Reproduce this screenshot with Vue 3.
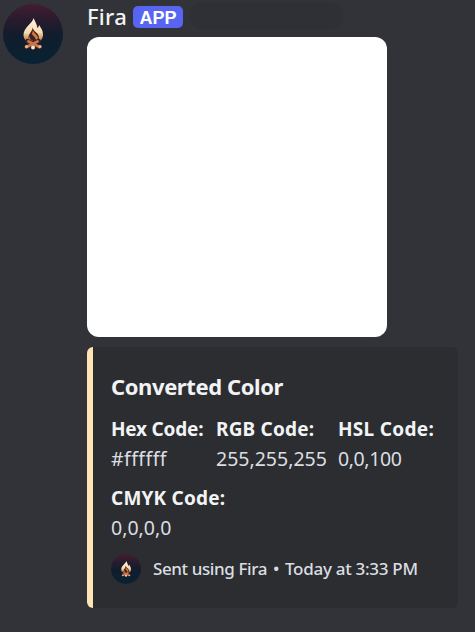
<script setup>
const fields = [
  { name: 'Hex Code:', value: '#ffffff', key: 'hex' },
  { name: 'RGB Code:', value: '255,255,255', key: 'rgb' },
  { name: 'HSL Code:', value: '0,0,100', key: 'hsl' },
  { name: 'CMYK Code:', value: '0,0,0,0', key: 'cmyk' },
]
</script>

<template>
  <main class="message">
    <svg class="avatar" viewBox="0 0 60 60">
      <defs>
        <linearGradient id="night" x1="0" y1="0" x2="0" y2="1">
          <stop offset="0" stop-color="#431e2f" />
          <stop offset=".25" stop-color="#2a1b2e" />
          <stop offset=".52" stop-color="#101d2d" />
          <stop offset="1" stop-color="#092234" />
        </linearGradient>
        <linearGradient id="flame" x1="0" y1="0" x2="0" y2="1">
          <stop offset="0" stop-color="#fff5df" />
          <stop offset=".6" stop-color="#f8dbb0" />
          <stop offset="1" stop-color="#b8683c" />
        </linearGradient>
        <symbol id="campfire" viewBox="0 0 60 60">
          <circle cx="30" cy="30" r="30" fill="url(#night)" />
          <path d="M30.500 14C30 19 20.500 23 20.500 31c0 3 1.500 5 4 7h11c3-2 4.500-4 4.500-7 0-5-2-7-4-10-.3 2-1 3-1.500 3C34 21 32 17 30.500 14Z" fill="url(#flame)" />
          <path d="M29.500 23.500c0 4-4 6-4 10 0 2 1 3 3 4h5c2-2 3-3 2-6-1-3-5-4-6-8Z" fill="#40231f" />
          <path d="M30 26c0 3 5 5 5 8l-2 3c0-4-3-5-4-7Zm-3 6c-1 3 1 4 3 5l-3 .5c-2-2-2-3 0-5.500Z" fill="#d87b47" />
          <path d="m23.500 43 12-6M36.500 43l-12-6" stroke="#3b2423" stroke-width="4.500" stroke-linecap="round" />
          <path d="m23.500 43 11-5.500M36.500 43l-11-5.500" stroke="#c87650" stroke-width="2.800" stroke-linecap="round" />
          <circle cx="23.500" cy="42.500" r="1.600" fill="#efb888" />
          <circle cx="37" cy="42.500" r="1.600" fill="#efb888" />
          <circle cx="30" cy="43.500" r="2" fill="#ffe4bd" />
        </symbol>
      </defs>
      <use href="#campfire" />
    </svg>
    <section class="content">
      <header class="author">
        <span class="name">Fira</span>
        <span class="badge">APP</span>
        <span class="timestamp"></span>
      </header>
      <div class="swatch"></div>
      <article class="embed">
        <h1 class="title">Converted Color</h1>
        <dl class="fields">
          <div v-for="field in fields" :key="field.key" :class="['field', field.key]">
            <dt>{{ field.name }}</dt>
            <dd>{{ field.value }}</dd>
          </div>
        </dl>
        <footer class="footer">
          <svg class="footer-icon" viewBox="0 0 60 60"><use href="#campfire" /></svg>
          <span class="sent">Sent using Fira</span>
          <span class="dot">•</span>
          <span class="time">Today at 3:33 PM</span>
        </footer>
      </article>
    </section>
  </main>
</template>

<style>
body { margin: 0; background: #313338; }
</style>

<style scoped>
.message {
  box-sizing: border-box;
  display: flex;
  gap: 24px;
  height: 632px;
  padding-left: 3px;
  overflow: hidden;
  background: #313338;
  color: #f2f3f5;
  font-family: "Noto Sans", sans-serif;
  white-space: nowrap;
}
.avatar { width: 60px; height: 60px; margin-top: 4px; flex: none; }
.content { width: 371px; flex: none; }
.author { display: flex; height: 37px; align-items: flex-start; }
.name { width: 46px; font-size: 22px; line-height: 33px; font-weight: 500; letter-spacing: 0.25px; }
.badge {
  width: 50px; height: 22px; margin-top: 6px; border-radius: 5px;
  background: #5865f2; color: #fff; text-align: center;
  font: 700 18px/24px "Liberation Sans", sans-serif;
}
.timestamp { width: 153px; height: 28px; margin: 2px 0 0 7px; border-radius: 14px; background: #2f3035; }
.swatch { width: 300px; height: 300px; border-radius: 12px; background: #fff; }
.embed {
  box-sizing: border-box; height: 261px; margin-top: 10px; padding: 25px 18px 0;
  border-left: 6px solid #ffe5b4; border-radius: 6px; background: #2b2d31;
}
.title { margin: 0; font-size: 22px; line-height: 28px; font-weight: 700; letter-spacing: -0.4px; }
.fields { display: grid; grid-template-columns: 105px 122px 100px; row-gap: 9px; margin: 14px 0 0; }
.field { height: 60px; }
dt { font-size: 19px; line-height: 30px; font-weight: 700; letter-spacing: 0.2px; }
dd { margin: 0; color: #dbdee1; font-size: 19.5px; line-height: 30px; font-weight: 400; }
.hex dt { letter-spacing: -0.2px; }
.hex dd { letter-spacing: 0.45px; }
.hsl dt { letter-spacing: 0.3px; }
.hsl dd { letter-spacing: -0.4px; }
.footer { display: flex; align-items: center; height: 30px; margin-top: 11px; color: #dbdee1; font-size: 17px; line-height: 24px; font-weight: 500; }
.footer-icon { width: 30px; height: 30px; margin-right: 12px; }
.sent { width: 120px; letter-spacing: -0.4px; }
.dot { width: 12px; }
.time { letter-spacing: -0.28px; }
</style>
